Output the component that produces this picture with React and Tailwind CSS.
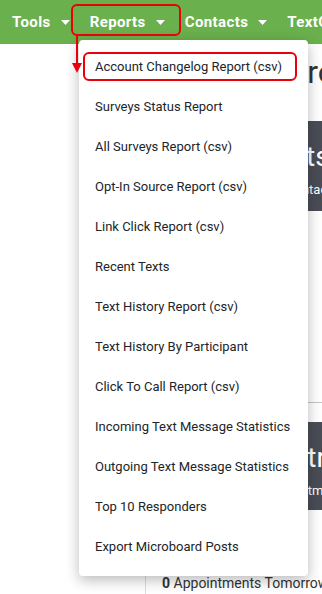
import React from 'react';

const REPORT_ITEMS = [
  'Account Changelog Report (csv)',
  'Surveys Status Report',
  'All Surveys Report (csv)',
  'Opt-In Source Report (csv)',
  'Link Click Report (csv)',
  'Recent Texts',
  'Text History Report (csv)',
  'Text History By Participant',
  'Click To Call Report (csv)',
  'Incoming Text Message Statistics',
  'Outgoing Text Message Statistics',
  'Top 10 Responders',
  'Export Microboard Posts',
];

function Caret() {
  return (
    <svg width="9" height="5" viewBox="0 0 9 5" className="ml-[10px] mt-[1px]">
      <polygon points="0,0 9,0 4.5,5" fill="white" />
    </svg>
  );
}

function NavItem({ label }) {
  return (
    <div className="flex items-center px-[10px] h-full text-white font-bold text-[15px] tracking-[0.4px]">
      <span>{label}</span>
      <Caret />
    </div>
  );
}

function App() {
  return (
    <div className="relative w-full h-[594px] overflow-hidden bg-white" style={{ fontFamily: 'Roboto, "Liberation Sans", sans-serif' }}>
      {/* top nav */}
      <div className="h-[44px] bg-[#6ab04c] flex items-center pl-[2px] whitespace-nowrap">
        <NavItem label="Tools" />
        <NavItem label="Reports" />
        <NavItem label="Contacts" />
        <NavItem label="TextOut" />
      </div>

      {/* page content behind the menu */}
      <div className="flex h-[550px]">
        <div className="w-[145px] shrink-0" />
        <div className="border-l border-[#dedede] pl-[16px] w-[400px] shrink-0 flex flex-col">
          <h1 className="text-[32px] text-[#333] leading-none mt-[12px] pl-[125px] whitespace-nowrap">Progress</h1>
          <div className="mt-[33px] h-[90px] bg-[#4a4d55] text-white whitespace-nowrap pt-[22px]">
            <div className="text-[28px] leading-none pl-[100px]">Texts</div>
            <div className="text-[13px] mt-[9px] pl-[124px]">Contacts</div>
          </div>
          <div className="mt-[191px] h-px bg-[#c4c4c4]" />
          <div className="mt-[19px] h-[89px] bg-[#4a4d55] text-white whitespace-nowrap pt-[22px]">
            <div className="text-[28px] leading-none pl-[106px]">Metrics</div>
            <div className="text-[13px] mt-[9px] pl-[105px]">Appointments</div>
          </div>
          <div className="mt-[63px] text-[14px] text-[#333] whitespace-nowrap">
            <span className="font-bold">0</span> Appointments Tomorrow
          </div>
        </div>
      </div>

      {/* reports dropdown */}
      <div className="absolute left-[79px] top-[40px] w-[229px] bg-white rounded-[4px] shadow-[0_4px_14px_rgba(0,0,0,0.28)] pt-[7px] pb-[9px]">
        {REPORT_ITEMS.map((item) => (
          <div key={item} className="h-[40px] flex items-center pl-[16px] text-[13px] text-[#212529] whitespace-nowrap">
            {item}
          </div>
        ))}
      </div>

      {/* annotation: highlight boxes + arrow */}
      <div className="absolute left-[71px] top-[4px] w-[110px] h-[32px] border-2 border-[#e8000b] rounded-[6px]" />
      <div className="absolute left-[83px] top-[52px] w-[214px] h-[29px] border-2 border-[#e8000b] rounded-[6px]" />
      <svg className="absolute left-[70px] top-[35px]" width="14" height="40" viewBox="0 0 14 40">
        <rect x="6" y="0" width="2" height="29" fill="#e8000b" />
        <polygon points="2,28 12,28 7,38" fill="#e8000b" />
      </svg>
    </div>
  );
}

export default App;
